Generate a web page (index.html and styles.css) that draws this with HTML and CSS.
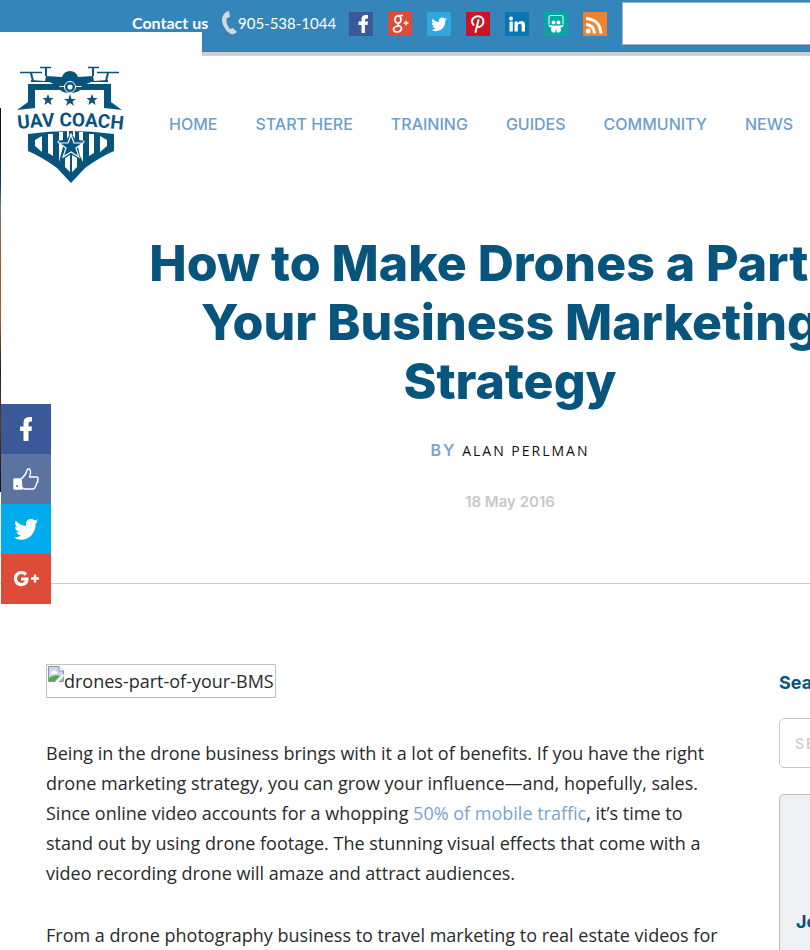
FILE: index.html
```
<!DOCTYPE html>
<html lang="en">
<head>
  <meta charset="UTF-8">
  <meta name="viewport" content="width=device-width, initial-scale=1.0">
  <title>How to Make Drones a Part of Your Business Marketing Strategy</title>
  <link rel="stylesheet" href="styles.css">
</head>
<body>
  <div class="page">
    <div class="topbar">
      <a class="contact" href="#">Contact us</a>
      <a class="phone" href="tel:9055381044">
        <svg width="17" height="24" viewBox="0 0 17 24" aria-hidden="true">
          <path d="M5 1 L8 0 L9 6 L6 7 Q4 12 9 18 L12 17 L16 21 L13 23 Q9 24 5 19 Q-3 8 5 1Z" fill="#d3d8dc"/>
        </svg>
        <span>905-538-1044</span>
      </a>
      <div class="social">
        <a class="facebook" href="#" aria-label="Facebook">
          <svg viewBox="0 0 24 24"><path d="M12.500 21V13H9.500V9.500H12.500V7.500Q12.500 3 16.500 3H19V6.500H17.500Q16 6.500 16 8V9.500H19L18.500 13H16V21Z" fill="#fff"/></svg>
        </a>
        <a class="google" href="#" aria-label="Google Plus">
          <svg viewBox="0 0 24 24" fill="none" stroke="#fff">
            <ellipse cx="10" cy="7.500" rx="3" ry="3.700" stroke-width="1.800"/>
            <path d="M10 3.500H15M11 11Q9 12 10 13Q14 15 13.500 17Q12.500 20 9 20Q5 19.500 5.500 17Q6.500 14 11 14" stroke-width="1.700"/>
            <path d="M15.500 11H20.500M18 8.500V13.500" stroke-width="1.300"/>
          </svg>
        </a>
        <a class="twitter" href="#" aria-label="Twitter">
          <svg viewBox="0 0 24 24"><use href="#bird" transform="translate(4 5) scale(.66)"/></svg>
        </a>
        <a class="pinterest" href="#" aria-label="Pinterest">
          <svg viewBox="0 0 24 24" fill="none" stroke="#fff" stroke-linecap="round">
            <path d="M7.500 13Q4.500 9 7.500 6Q11 3 15 5Q19 8 16.500 12.500Q14 16.500 11 14" stroke-width="2"/>
            <path d="M12.500 8L9.500 20" stroke-width="2"/>
          </svg>
        </a>
        <a class="linkedin" href="#" aria-label="LinkedIn">
          <svg viewBox="0 0 24 24" fill="#fff">
            <circle cx="6" cy="6.500" r="2"/>
            <path d="M4.500 9.500H7.800V19.500H4.500ZM9.500 9.500H12.700V11Q14 9 16.500 9Q20 9 20 13V19.500H16.700V14Q16.700 11.800 15 11.800Q12.800 11.800 12.800 14V19.500H9.500Z"/>
          </svg>
        </a>
        <a class="slideshare" href="#" aria-label="SlideShare">
          <svg viewBox="0 0 24 24" fill="#fff">
            <path d="M5 12V5Q5 3.500 6.500 3.500H17.500Q19 3.500 19 5V12" fill="none" stroke="#fff" stroke-width="1"/>
            <circle cx="9.500" cy="10.500" r="2"/><circle cx="14.500" cy="10.500" r="2"/>
            <path d="M4 12.500Q8 14 11.500 13.500H12.500Q17 14 20 12.500Q19 15 16.800 15.500V19Q15 21.500 12.500 20V17.500H11.500V20Q9 21.500 7.200 19V15.500Q5 15 4 12.500Z"/>
          </svg>
        </a>
        <a class="rss" href="#" aria-label="RSS">
          <svg viewBox="0 0 24 24" fill="none" stroke="#fff">
            <circle cx="5.200" cy="19" r="2.500" fill="#fff" stroke="none"/>
            <path d="M3 12.500Q11 13 11.500 21.500M3 6.500Q17 7.500 18 21.500" stroke-width="3"/>
          </svg>
        </a>
      </div>
      <input class="top-search" type="text" aria-label="Search the site">
    </div>

    <header class="masthead">
      <a class="logo" href="#" aria-label="UAV Coach">
        <svg width="108" height="120" viewBox="0 0 108 120" fill="#07547d">
          <g fill="none" stroke="#07547d">
            <path d="M3 6.500H25M80 6.500H102M23 1.500H34M71 1.500H82" stroke-width="1.400"/>
            <path d="M14 7L16 15M91 7L89 15M29 2V10M76 2V10" stroke-width="2"/>
          </g>
          <path d="M14 14L28 15L29 10L45 11Q47 5 53 5Q59 5 61 11L76 10L77 15L91 14V16L74 16L65 20H41L32 16H14Z"/>
          <path d="M11 18H40L43 21H64L67 18H94V36L105 44L87 42V24H63Q60 27 53 27Q46 27 43 24H18V42L0 44L11 36Z"/>
          <circle cx="53" cy="21" r="5.500" stroke="#fff" stroke-width="1"/>
          <circle cx="53" cy="21" r="2.600" fill="#fff"/>
          <path id="star" d="M31 28L32.500 32H36.500L33.500 34.500L34.500 39L31 36.500L27.500 39L28.500 34.500L25.500 32H29.500Z"/>
          <use href="#star" x="44"/>
          <path d="M53 28L54.500 33H59L55.500 35.500L57 40L53 37L49 40L50.500 35.500L47 33H51.500Z"/>
          <path id="arch" d="M1 63Q54 57 108 64" fill="none"/>
          <text class="logo-text"><textPath href="#arch">UAV COACH</textPath></text>
          <path d="M11 68Q53 62 97 68V85Q83 91 68 102L54 117L40 102Q25 91 11 85Z"/>
          <path d="M18 74L25 70V86L18 80ZM31 68H36V90L31 87ZM42 66H46V74L40 75L46 81L43 92L42 96ZM62 66H66V96L63 90L61 81L68 75L62 74ZM72 68H77V87L72 90ZM83 70L90 74V80L83 86ZM48 92L53 89V106L48 101ZM55 89L60 92V101L55 106ZM50 65H52V69H56V65H58V73L54 67L50 73Z" fill="#fff"/>
          <path d="M54 69L57 77H66L59 82L62 91L54 86L46 91L49 82L42 77H51Z" stroke="#fff" stroke-width="1.200"/>
        </svg>
      </a>
      <nav class="menu">
        <a href="#">HOME</a>
        <a href="#">START HERE</a>
        <a href="#">TRAINING</a>
        <a href="#">GUIDES</a>
        <a href="#">COMMUNITY</a>
        <a href="#">NEWS</a>
      </nav>
    </header>

    <section class="intro">
      <h1>How to Make Drones a Part of<br>Your Business Marketing<br>Strategy</h1>
      <p class="byline"><span class="by">BY</span> <span class="author">ALAN PERLMAN</span></p>
      <p class="date">18 May 2016</p>
    </section>

    <div class="content">
      <main class="article">
        <div class="missing-image">
          <svg width="16" height="16" viewBox="0 0 16 16" aria-hidden="true">
            <path d="M.5 .5H11L15.500 5V15.500H.5Z" fill="#c7d9f1" stroke="#8d949c"/>
            <path d="M11 .5V5H15.500" fill="#fff" stroke="#8d949c"/>
            <path d="M3 7Q3 5 5 5Q7 3 8 6Q10 6 9 8H3Z" fill="#fff"/>
            <path d="M1 15V12Q6 8 12 10L7 15Z" fill="#4fa844"/>
            <path d="M7 16L16 8V10L10 16Z" fill="#fff"/>
            <path d="M11 15.500H15.500V11Z" fill="#a7b1a8"/>
          </svg>
          <span>drones-part-of-your-BMS</span>
        </div>
        <p>Being in the drone business brings with it a lot of benefits. If you have the right drone marketing strategy, you can grow your influence—and, hopefully, sales. Since online video accounts for a whopping <a href="#">50% of mobile traffic</a>, it’s time to stand out by using drone footage. The stunning visual effects that come with a video recording drone will amaze and attract audiences.</p>
        <p>From a drone photography business to travel marketing to real estate videos for</p>
      </main>
      <aside class="sidebar">
        <label for="search">Search</label>
        <input id="search" type="text" placeholder="SEARCH">
        <div class="join">
          <h3>Join</h3>
        </div>
      </aside>
    </div>
  </div>

  <div class="page-edge"></div>

  <div class="share">
    <a class="facebook" href="#" aria-label="Share on Facebook">
      <svg viewBox="0 0 50 50"><path d="M22.500 37V27H19V22.500H22.500V19Q22.500 13 28 13H31V17.500H29.500Q27.500 17.500 27.500 19.500V22.500H31L30.500 27H27.500V37Z" fill="#fff"/></svg>
    </a>
    <a class="like" href="#" aria-label="Like">
      <svg viewBox="0 0 50 50" stroke="#fff" stroke-width="1.400" stroke-linejoin="round">
        <path d="M13 25H20L21 35H13Z" fill="#fff"/>
        <path d="M20 25Q25 21 26 16Q28 13 29.500 17Q30 19 28.500 23H36Q38 24 36.500 26Q37.500 28 35.500 29Q36 31 34.500 32Q34 35 32 35H24L21 34" fill="none"/>
        <circle cx="16" cy="32" r="1" fill="#55739f" stroke="none"/>
      </svg>
    </a>
    <a class="twitter" href="#" aria-label="Share on Twitter">
      <svg viewBox="0 0 50 50">
        <g transform="translate(13 14)">
          <path id="bird" d="M24 3Q23 4.500 21.600 5.500Q22 14 15 19.500Q7 24 0 19.500Q4 19.700 7 17.500Q3.500 17 2.500 14Q4 14.200 5 13.800Q1 12.500 1 8.800Q2 9.500 3.300 9.500Q0 6.500 1.800 2.800Q6 7.600 12 8Q11 3 15 1.200Q18.500 0 20.500 2.500Q22 2.100 23.500 1.200Q23 3 21.500 4Q23 3.700 24 3Z" fill="#fff"/>
        </g>
      </svg>
    </a>
    <a class="google" href="#" aria-label="Share on Google Plus">
      <svg viewBox="0 0 50 50" fill="none" stroke="#fff" stroke-width="3.200">
        <path d="M25 20.500Q22 17.500 18 19Q14 21 14.500 25.500Q16 31 21 30.500Q26 29.500 26 25H20"/>
        <path d="M30 24.500H38M34 20.500V28.500" stroke-width="2.400"/>
      </svg>
    </a>
  </div>
</body>
</html>
```
FILE: styles.css
```
/* General */
* {
  box-sizing: border-box;
}

body {
  margin: 0;
  background: #fff;
  color: #2a2a2a;
  font-family: "Open Sans", sans-serif;
  font-size: 18px;
  line-height: 30px;
  overflow-x: hidden;
}

a {
  color: #7ba3cb;
  text-decoration: none;
}

.page {
  min-width: 1020px;
}

/* Top bar */
.topbar {
  display: flex;
  align-items: flex-start;
  height: 56px;
  padding: 2px 0 0 132px;
  background: #3485b9;
  border-bottom: 4px solid #cfcfcf;
  box-shadow: inset 0 -1px #52758a;
}

.topbar a {
  color: #fff;
}

.contact,
.phone {
  margin-top: 6px;
  font-family: Lato, sans-serif;
}

.contact {
  width: 89px;
  font-size: 16px;
  font-weight: 700;
}

.phone {
  display: flex;
  align-items: center;
  width: 128px;
  font-size: 15px;
}

.social {
  display: flex;
  gap: 15px;
  margin-top: 10px;
}

.social a {
  width: 24px;
  height: 24px;
}

.social svg,
.share svg {
  display: block;
}

.facebook { background: #3b5998; }
.google { background: #dd4b39; }
.social .twitter { background: #2fa8e0; }
.pinterest { background: #cb1527; }
.linkedin { background: #0976b4; }
.slideshare { background: #07a8a3; }
.rss { background: #ee822f; }

.top-search {
  flex: 1;
  height: 43px;
  margin-left: 15px;
  padding: 0 10px;
  border: 1px solid #9fb5c5;
  background: #fff;
}

/* Logo and menu */
.masthead {
  position: relative;
  height: 138px;
  padding: 53px 0 0 169px;
}

.logo {
  position: absolute;
  top: -24px;
  left: 0;
  width: 202px;
  height: 160px;
  padding: 34px 0 0 17px;
  background: #fff;
}

.logo svg {
  overflow: visible;
}

.logo-text {
  font-family: Roboto, sans-serif;
  font-size: 19px;
  font-weight: 700;
}

.menu {
  position: relative;
  display: flex;
  gap: 38px;
  font-family: Inter, sans-serif;
  font-size: 16px;
  font-weight: 500;
}

.menu a {
  color: #6d9fc8;
}

/* Title */
.intro {
  padding: 40px 0 66px;
  border-bottom: 1px solid #ccc;
  text-align: center;
}

h1 {
  margin: 0;
  color: #07547d;
  font-family: Inter, sans-serif;
  font-size: 50px;
  font-weight: 800;
  line-height: 59px;
}

.byline {
  margin: 24px 0 21px;
  color: #111;
  font-size: 14px;
  letter-spacing: 2px;
}

.by {
  color: #7ba3cb;
  font-family: Inter, sans-serif;
  font-size: 16px;
  font-weight: 600;
}

.date {
  margin: 0;
  color: #c8c8c8;
  font-family: Inter, sans-serif;
  font-size: 15px;
  font-weight: 600;
}

/* Content */
.content {
  display: grid;
  grid-template-columns: 685px 1fr;
  gap: 48px;
  padding: 80px 46px 0;
}

.article p {
  margin: 0 0 32px;
}

.missing-image {
  display: flex;
  width: max-content;
  height: 34px;
  margin-bottom: 40px;
  padding: 1px;
  border: 1px solid #c0c0c0;
}

.sidebar label,
.join h3 {
  display: block;
  margin: 4px 0 20px;
  color: #07547d;
  font-family: Inter, sans-serif;
  font-size: 18px;
  font-weight: 700;
}

.sidebar input {
  width: 100%;
  height: 50px;
  padding: 0 15px;
  border: 1px solid #c5c8cc;
  border-radius: 5px;
  font-family: Inter, sans-serif;
  font-size: 14px;
  font-weight: 600;
  letter-spacing: 2px;
}

.sidebar input::placeholder {
  color: #d0d0d0;
}

.join {
  height: 400px;
  margin-top: 26px;
  padding: 108px 16px;
  border: 1px solid #b5bdc8;
  border-radius: 5px;
  background: #eef0f3;
}

/* Sliver of the off-canvas panel */
.page-edge {
  position: absolute;
  top: 108px;
  left: 0;
  width: 1px;
  height: 384px;
  background: linear-gradient(#111 0, #111 10%, #064776 20%, #777 26%, #9b592f 40%, #a85b2d 55%, #222 68%, #6a3520 82%, #111 100%);
}

/* Share buttons */
.share {
  position: fixed;
  top: 404px;
  left: 1px;
  width: 50px;
}

.share a {
  display: block;
  height: 50px;
}

.like { background: #5a739f; }
.share .twitter { background: #00aced; }
```
